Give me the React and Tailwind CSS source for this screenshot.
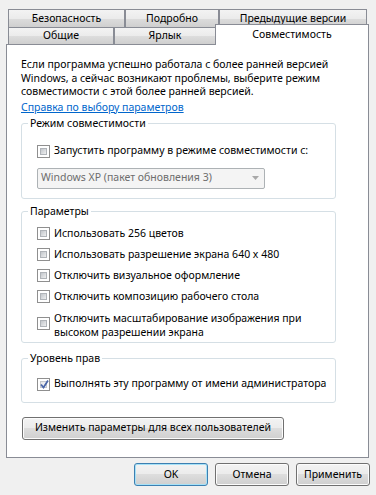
const tabBg = 'bg-[linear-gradient(#f3f3f3,#ebebeb_50%,#dddddd_50%,#cfcfcf)]';

const Tab = ({ label, w }) => (
  <div className={`${w} h-full border-x border-t border-[#898c95] ${tabBg} flex items-center justify-center`}>
    {label}
  </div>
);

const CheckBox = ({ checked }) => (
  <span className="w-[13px] h-[13px] shrink-0 border border-[#8f8f8f] bg-white p-[2px] flex relative">
    {checked ? (
      <span className="flex-1 bg-[linear-gradient(135deg,#e3e4e6,#fbfbfb)] border border-[#c5c8cc]" />
    ) : (
      <span className="flex-1 bg-[linear-gradient(135deg,#c2c6cb,#eeeff0)] border border-[#b0b4b9]" />
    )}
    {checked && (
      <svg className="absolute left-[1px] top-[0px]" width="11" height="11" viewBox="0 0 11 11">
        <path d="M2 5.5 L4.5 8.5 L9 1.5" fill="none" stroke="#4a66a8" strokeWidth="1.8" />
      </svg>
    )}
  </span>
);

const Option = ({ children, checked, className = '' }) => (
  <div className={`flex items-center gap-[4px] h-[21px] ${className}`}>
    <CheckBox checked={checked} />
    <span>{children}</span>
  </div>
);

const Group = ({ title, className = '', children }) => (
  <fieldset className={`w-[315px] border border-[#d5dfe5] rounded-[3px] px-[6px] ${className}`}>
    <legend className="px-[2px] leading-[13.5px]">{title}</legend>
    <div className="pl-[9px]">{children}</div>
  </fieldset>
);

const Button = ({ children, w, primary }) => (
  <button
    className={`${w} h-[23px] rounded-[3px] border ${
      primary ? 'border-[#3c7fb1] shadow-[inset_0_0_0_1px_#a6e1f7]' : 'border-[#707070] shadow-[inset_0_0_0_1px_#fcfcfc]'
    } ${tabBg} flex items-center justify-center`}
  >
    {children}
  </button>
);

export default function App() {
  return (
    <div className="w-[376px] h-[495px] bg-[#f0f0f0] text-[10.5px] text-black font-['Noto_Sans',sans-serif] whitespace-nowrap pt-[9px] overflow-hidden">
      {/* tabs */}
      <div className="ml-[8px] flex h-[18px]">
        <Tab label="Безопасность" w="w-[117px]" />
        <Tab label="Подробно" w="w-[94px]" />
        <Tab label="Предыдущие версии" w="w-[148px]" />
      </div>
      <div className="ml-[8px] flex h-[17px]">
        <Tab label="Общие" w="w-[106px]" />
        <Tab label="Ярлык" w="w-[102px]" />
        <div className="w-[154px] h-[21px] -mt-[3px] -ml-[1px] relative z-10 bg-white border-x border-t border-[#898c95] flex items-center justify-center pb-[1px]">
          Совместимость
        </div>
      </div>

      {/* panel */}
      <div className="ml-[6px] w-[363px] h-[414px] bg-white border border-[#898c95] pl-[14px] pt-[13px]">
        <p className="leading-[13.5px]">
          Если программа успешно работала с более ранней версией
          <br />
          Windows, а сейчас возникают проблемы, выберите режим
          <br />
          совместимости с этой более ранней версией.
        </p>
        <a className="block w-fit leading-[13.5px] mt-[2px] text-[#0066cc] underline">Справка по выбору параметров</a>

        <Group title="Режим совместимости" className="mt-[3px] pb-[9px]">
          <Option className="mt-[10px] h-[15px]">Запустить программу в режиме совместимости с:</Option>
          <div className="mt-[6px] w-[228px] h-[21px] border border-[#adb2b5] rounded-[2px] bg-[#f4f4f4] text-[#6d6d6d] flex items-center pl-[3px] pr-[5px]">
            <span className="flex-1">Windows XP (пакет обновления 3)</span>
            <svg width="7" height="4" viewBox="0 0 7 4">
              <path d="M0 0 H7 L3.5 4 Z" fill="#a8a8a8" />
            </svg>
          </div>
        </Group>

        <Group title="Параметры" className="mt-[6px] pb-[3px]">
          <Option className="mt-[5px]">Использовать 256 цветов</Option>
          <Option>Использовать разрешение экрана 640 x 480</Option>
          <Option>Отключить визуальное оформление</Option>
          <Option>Отключить композицию рабочего стола</Option>
          <div className="flex items-start gap-[4px] mt-[5px]">
            <span className="mt-[5px]">
              <CheckBox />
            </span>
            <span className="leading-[13.5px]">
              Отключить масштабирование изображения при
              <br />
              высоком разрешении экрана
            </span>
          </div>
        </Group>

        <Group title="Уровень прав" className="mt-[9px] pb-[7px]">
          <Option checked className="mt-[8px] h-[15px]">Выполнять эту программу от имени администратора</Option>
        </Group>

        <div className="mt-[14px] ml-[1px]">
          <Button w="w-[262px]">Изменить параметры для всех пользователей</Button>
        </div>
      </div>

      {/* dialog buttons */}
      <div className="mt-[5px] pr-[6px] flex justify-end gap-[7px]">
        <Button w="w-[74px]" primary>OK</Button>
        <Button w="w-[74px]">Отмена</Button>
        <Button w="w-[74px]">Применить</Button>
      </div>
    </div>
  );
}
